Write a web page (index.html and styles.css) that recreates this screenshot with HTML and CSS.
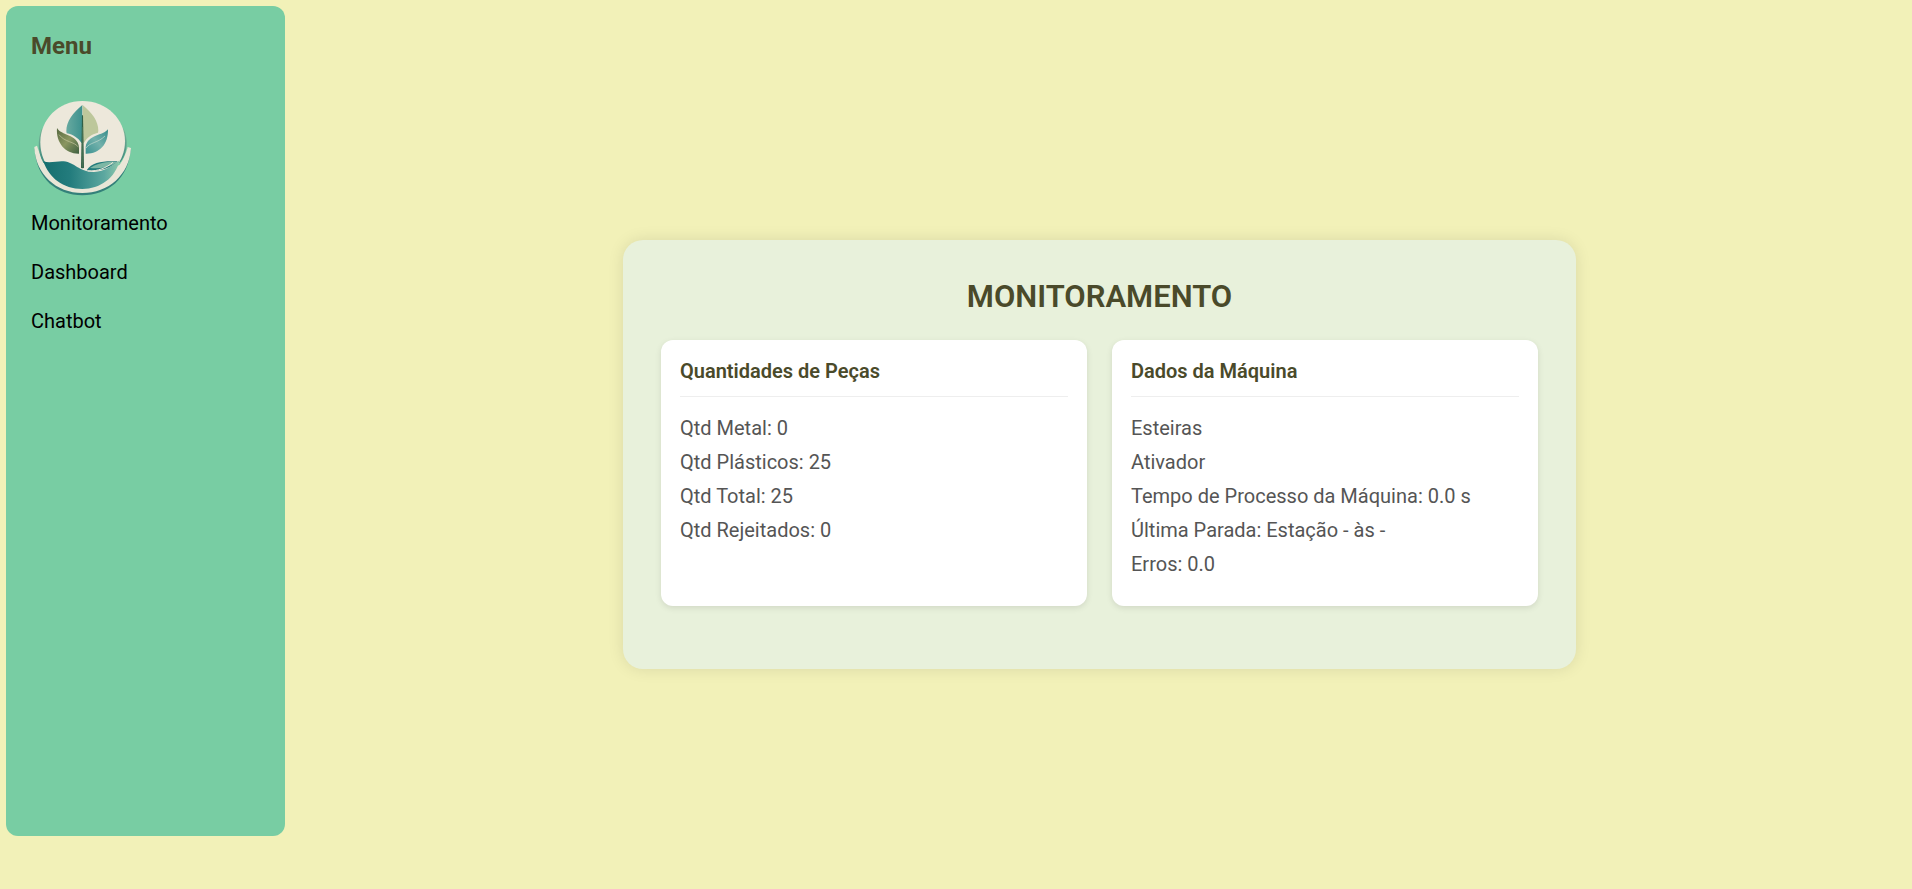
FILE: index.html
```html
<!DOCTYPE html>
<html lang="pt-BR">
<head>
<meta charset="utf-8">
<title>Monitoramento</title>
<link rel="stylesheet" href="styles.css">
</head>
<body>
<div class="layout">
  <aside class="sidebar">
    <h2 class="sidebar-title">Menu</h2>
    <svg class="logo" viewBox="18 18 312 300" role="img" aria-label="Logo">
      <defs>
        <linearGradient id="water" x1="0" x2="1"><stop offset="0" stop-color="#146e6e"/><stop offset=".35" stop-color="#237c7d"/><stop offset=".8" stop-color="#5da8a0"/><stop offset="1" stop-color="#8cc8ab"/></linearGradient>
        <linearGradient id="edge" x1="0" y1="0" x2="0" y2="1"><stop offset="0" stop-color="#78b596"/><stop offset=".5" stop-color="#5d9d8b"/><stop offset="1" stop-color="#37847a"/></linearGradient>
        <linearGradient id="leafTeal" x1="0" x2="1"><stop offset="0" stop-color="#68aaa0"/><stop offset="1" stop-color="#3d918e"/></linearGradient>
        <linearGradient id="leafOlive" x1="0" y1="0" x2="1" y2="1"><stop offset="0" stop-color="#56683f"/><stop offset=".5" stop-color="#8b9661"/><stop offset="1" stop-color="#3e6040"/></linearGradient>
        <linearGradient id="leafRight" x1="0" y1="1" x2="1" y2="0"><stop offset="0" stop-color="#3c9291"/><stop offset=".5" stop-color="#72b1ab"/><stop offset="1" stop-color="#368d8b"/></linearGradient>
      </defs>
      <path d="M29 172C34 261 96 310 172 310S311 261 317 172L308 168C300 245 246 294 172 294S48 245 37 168Z" fill="#34807a"/>
      <path d="M28 165L36 161C42 180 52 205 60 218L172 280L284 218C295 203 303 184 308 165L318 168C313 249 250 303 172 303S31 247 28 165Z" fill="#e9e6d7"/>
      <path d="M50 110C38 142 37 180 55 212L70 220L274 220L288 208C308 180 310 142 296 110Z" fill="url(#edge)"/>
      <path d="M172 27C246 27 300 82 300 148C300 180 288 204 277 220L172 263L60 211C52 196 46 174 46 151C46 82 100 27 172 27Z" fill="#ede8db"/>
      <path d="M55 208C75 215 98 206 116 208C151 212 159 239 207 240C240 239 260 222 284 205C271 259 225 291 172 291C114 291 72 258 55 208Z" fill="url(#water)"/>
      <path d="M185 235C199 213 226 208 259 208L278 208C254 230 222 240 185 235Z" fill="#237b7c"/>
      <path d="M195 228C215 215 236 210 260 209L278 211C252 225 225 232 195 228Z" fill="#7db7a5"/>
      <path d="M188 237C221 238 244 227 264 211" fill="none" stroke="#ede8db" stroke-width="3"/>
      <path d="M172 39C144 62 124 87 124 118L125 124C145 128 159 138 169 152L172 154Z" fill="url(#leafTeal)"/>
      <path d="M173 39C201 62 220 87 220 116L219 122C199 127 186 137 177 152L173 154Z" fill="#bdc79b"/>
      <path d="M96 108C108 131 157 126 162 164V185C122 186 92 153 96 108Z" fill="url(#leafOlive)"/>
      <path d="M102 128C119 151 148 148 161 166" fill="none" stroke="#c9c9a1" stroke-width="2"/>
      <path d="M249 112C235 131 188 128 182 164V185C223 186 250 158 249 112Z" fill="url(#leafRight)"/>
      <path d="M183 168C194 151 219 153 240 132" fill="none" stroke="#c7ddd0" stroke-width="2"/>
      <path d="M171 70H174L177 227Q172 231 168 227Z" fill="#305f46"/>
      <path d="M173 105L173 226" stroke="#7d956b" stroke-width="1"/>
    </svg>
    <nav class="nav">
      <a class="nav-link" href="#monitoramento">Monitoramento</a>
      <a class="nav-link" href="#dashboard">Dashboard</a>
      <a class="nav-link" href="#chatbot">Chatbot</a>
    </nav>
  </aside>
  <main class="content">
    <section class="panel" id="monitoramento">
      <h1 class="panel-title">MONITORAMENTO</h1>
      <div class="cards">
        <section class="card">
          <h2 class="card-title">Quantidades de Peças</h2>
          <p class="card-row">Qtd Metal: 0</p>
          <p class="card-row">Qtd Plásticos: 25</p>
          <p class="card-row">Qtd Total: 25</p>
          <p class="card-row">Qtd Rejeitados: 0</p>
        </section>
        <section class="card">
          <h2 class="card-title">Dados da Máquina</h2>
          <p class="card-row">Esteiras</p>
          <p class="card-row">Ativador</p>
          <p class="card-row">Tempo de Processo da Máquina: 0.0 s</p>
          <p class="card-row">Última Parada: Estação - às -</p>
          <p class="card-row">Erros: 0.0</p>
        </section>
      </div>
    </section>
  </main>
</div>
</body>
</html>
```
FILE: styles.css
```css
* {
  box-sizing: border-box;
}

body {
  margin: 0;
  background: #f2f1b8;
  font-family: Roboto, "Liberation Sans", sans-serif;
  font-size: 20px;
}

h1, h2, p {
  margin: 0;
}

.layout {
  display: flex;
  min-height: 100vh;
}

.sidebar {
  flex: none;
  width: 279px;
  margin: 6px 0 53px 6px;
  padding: 25px;
  border-radius: 12px;
  background: #78cda3;
}

.sidebar-title {
  color: #4a4a2a;
  font-size: 24px;
  line-height: 30px;
}

.logo {
  display: block;
  width: 104px;
  height: 100px;
  margin-top: 37px;
}

.nav {
  display: flex;
  flex-direction: column;
  align-items: flex-start;
  gap: 25px;
  margin-top: 13px;
}

.nav-link {
  color: #000;
  line-height: 24px;
  text-decoration: none;
}

.content {
  flex: 1;
  display: flex;
  align-items: center;
  justify-content: center;
  padding: 20px 0 0 2px;
}

.panel {
  width: 100%;
  max-width: 953px;
  padding: 38px 38px 63px;
  border-radius: 20px;
  background: #e8f1db;
  box-shadow: 0 0 16px rgba(0, 0, 0, 0.1);
}

.panel-title {
  margin-bottom: 24px;
  color: #4a4a2a;
  font-size: 31px;
  font-weight: 600;
  line-height: 38px;
  text-align: center;
}

.cards {
  display: grid;
  grid-template-columns: 1fr 1fr;
  gap: 25px;
}

.card {
  padding: 19px 19px 25px;
  border-radius: 12px;
  background: #fff;
  box-shadow: 0 2px 6px rgba(0, 0, 0, 0.1);
}

.card-title {
  margin-bottom: 14px;
  padding-bottom: 13px;
  border-bottom: 1px solid #eee;
  color: #4a4a2a;
  font-size: 20px;
  font-weight: 600;
  line-height: 24px;
}

.card-row {
  color: #555;
  line-height: 34px;
}
```
